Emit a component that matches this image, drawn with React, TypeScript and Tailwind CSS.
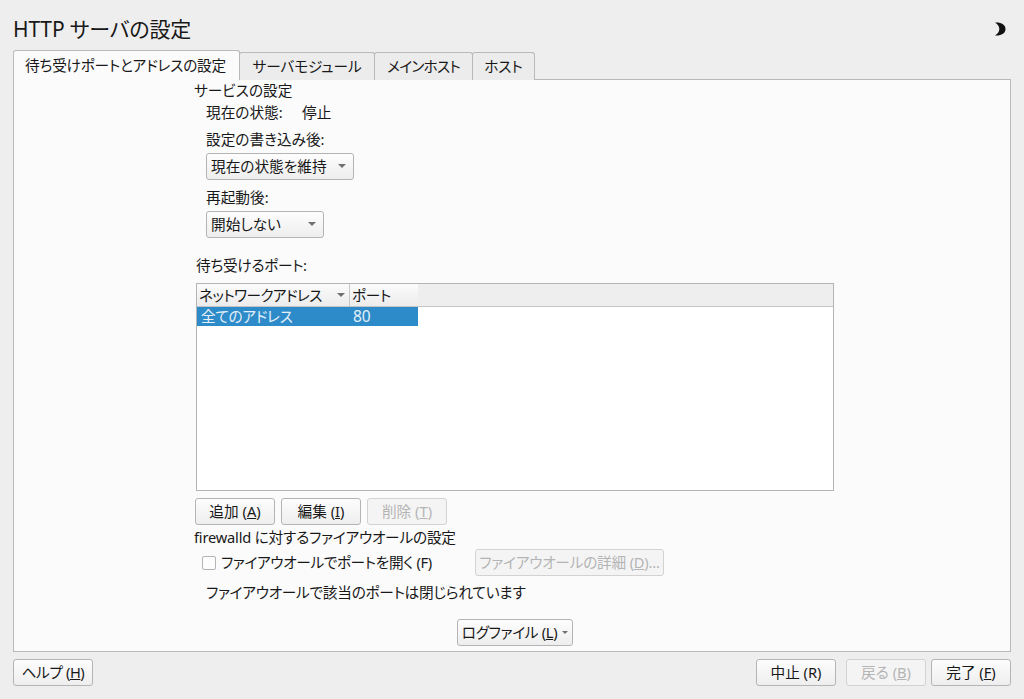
import React from 'react';

const btn = 'flex h-[27px] items-center rounded-[3px] border border-[#b4b4b4] bg-gradient-to-b from-[#fdfdfd] to-[#eeeeee] pb-px text-[#181818] whitespace-nowrap';
const btnOff = 'flex h-[27px] items-center justify-center rounded-[3px] border border-[#d2d2d2] bg-[#f4f4f4] pb-px text-[#b4b4b4] whitespace-nowrap';

function Caret({ className }: { className?: string }) {
  return (
    <svg className={className} width="8" height="4" viewBox="0 0 8 4">
      <path d="M0 0h8L4 4z" fill="#707070" />
    </svg>
  );
}

function Combo({ label, width }: { label: string; width: string }) {
  return (
    <div className={`${btn} ${width} justify-between pl-[4px] pr-[7px]`}>
      <span>{label}</span>
      <Caret />
    </div>
  );
}

function Tab({ label, width, tracking }: { label: string; width: string; tracking?: string }) {
  return (
    <div className={`${width} ${tracking ?? ''} -ml-px flex h-[28px] items-center justify-center rounded-t-[3px] border border-b-0 border-[#b9b9b9] bg-[#ececec] pb-[2px] text-[#181818]`}>
      {label}
    </div>
  );
}

export default function App() {
  return (
    <div className="flex h-[699px] w-[1024px] flex-col overflow-hidden bg-[#eeeeee] px-[13px] font-['Noto_Sans','Noto_Sans_CJK_JP',sans-serif] text-[14.67px] leading-[20px] text-[#181818] [font-feature-settings:'palt']">
      <div className="flex h-[50px] items-center justify-between pt-[7px]">
        <h1 className="text-[21px] font-normal leading-[28px] tracking-[-0.15px] text-[#181818]">HTTP サーバの設定</h1>
        <svg className="mr-[5px] mt-[1px]" width="11" height="14" viewBox="0 0 11 14">
          <path d="M0 .5C6 0 10.500 2.500 10.500 7S6 14 0 13.500C3 11.500 4.300 9.500 4.300 7S3 2.500 0 .5z" fill="#111" />
        </svg>
      </div>

      <div className="relative z-10 flex h-[30px] items-end">
        <div className="z-10 flex h-[30px] w-[227px] items-center justify-center rounded-t-[3px] border border-b-0 border-[#b9b9b9] bg-[#fbfbfb] pb-px pr-[2px] tracking-[-0.2px]">
          待ち受けポートとアドレスの設定
        </div>
        <Tab label="サーバモジュール" width="w-[136px]" tracking="tracking-[-0.1px]" />
        <Tab label="メインホスト" width="w-[99px]" tracking="tracking-[-0.8px]" />
        <Tab label="ホスト" width="w-[63px]" />
      </div>

      <div className="-mt-px flex h-[573px] flex-col border border-[#b9b9b9] bg-[#fbfbfb] pl-[180px]">
        <div>サービスの設定</div>
        <div className="ml-[12px] mt-[2px] flex">
          <span className="w-[96px]">現在の状態:</span>
          <span>停止</span>
        </div>
        <div className="ml-[12px] mt-[7px]">設定の書き込み後:</div>
        <div className="ml-[12px] mt-[4px]">
          <Combo label="現在の状態を維持" width="w-[148px]" />
        </div>
        <div className="ml-[12px] mt-[7px]">再起動後:</div>
        <div className="ml-[12px] mt-[4px]">
          <Combo label="開始しない" width="w-[118px]" />
        </div>
        <div className="ml-[2px] mt-[17px] tracking-[-0.3px]">待ち受けるポート:</div>

        <div className="ml-[2px] mt-[8px] h-[208px] w-[638px] border border-[#b4b4b4] bg-white">
          <div className="flex h-[23px] border-b border-[#c4c4c4] bg-[#eeeeee]">
            <div className="flex w-[153px] items-center justify-between whitespace-nowrap border-r border-[#c8c8c8] bg-gradient-to-b from-[#fbfbfb] to-[#ececec] pl-[2px] pr-[4px]">
              <span className="tracking-[-0.6px]">ネットワークアドレス</span>
              <Caret />
            </div>
            <div className="flex w-[68px] items-center bg-gradient-to-b from-[#fbfbfb] to-[#ececec] pl-[2px] tracking-[-0.3px]">ポート</div>
          </div>
          <div className="flex h-[19px] w-[221px] items-center bg-[#2e8bc9] pb-px text-[#e4f0f8]">
            <span className="w-[153px] pl-[4px] tracking-[-0.3px]">全てのアドレス</span>
            <span className="pl-[3px] text-[15.500px]">80</span>
          </div>
        </div>

        <div className="mt-[7px] flex gap-[6px] pl-px">
          <div className={`${btn} w-[80px] justify-center`}><span>追加 (<u>A</u>)</span></div>
          <div className={`${btn} w-[80px] justify-center`}><span>編集 (<u>I</u>)</span></div>
          <div className={`${btnOff} w-[80px]`}><span>削除 (<u>T</u>)</span></div>
        </div>

        <div className="mt-[2px] tracking-[-0.2px]">firewalld に対するファイアウオールの設定</div>

        <div className="mt-[2px] flex h-[27px] items-center pl-[8px]">
          <div className="h-[14px] w-[14px] rounded-[2px] border border-[#b4b4b4] bg-[#fdfdfd]" />
          <span className="ml-[5px] w-[254px] pb-[2px] tracking-[-0.35px]">ファイアウオールでポートを開く (F)</span>
          <div className={`${btnOff} w-[189px] tracking-[-0.2px]`}><span>ファイアウオールの詳細 (<u>D</u>)...</span></div>
        </div>

        <div className="ml-[12px] mt-[6px] tracking-[-0.25px]">ファイアウオールで該当のポートは閉じられています</div>

        <div className="ml-[263px] mt-[17px]">
          <div className={`${btn} w-[116px] justify-center gap-[5px] tracking-[-0.3px]`}>
            <span>ログファイル (<u>L</u>)</span>
            <Caret className="h-[3px] w-[6px]" />
          </div>
        </div>
      </div>

      <div className="mt-[7px] flex items-center">
        <div className={`${btn} w-[80px] justify-center tracking-[-0.4px]`}><span>ヘルプ (<u>H</u>)</span></div>
        <div className="ml-auto flex gap-[5px]">
          <div className={`${btn} mr-[5px] w-[80px] justify-center`}><span>中止 (R)</span></div>
          <div className={`${btnOff} w-[80px]`}><span>戻る (<u>B</u>)</span></div>
          <div className={`${btn} w-[80px] justify-center`}><span>完了 (<u>F</u>)</span></div>
        </div>
      </div>
    </div>
  );
}
